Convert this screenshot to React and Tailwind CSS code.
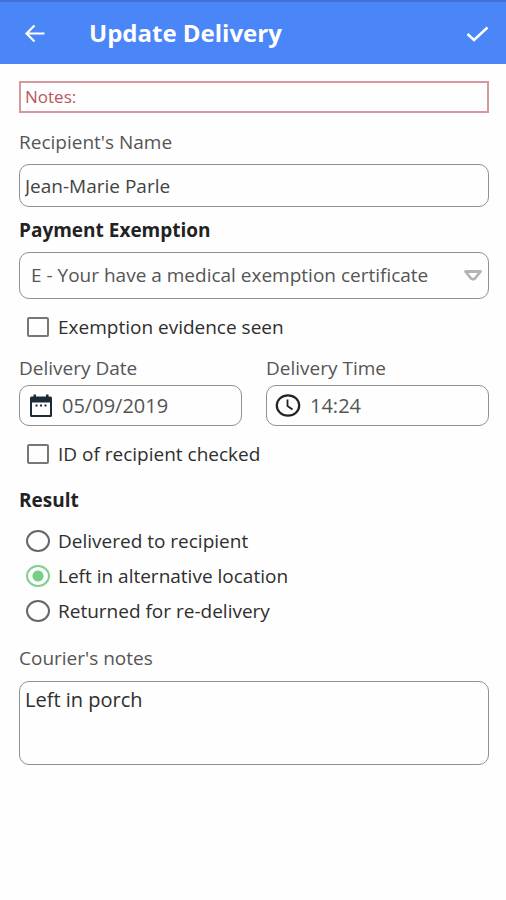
import { useState } from "react";

function BackIcon() {
  return (
    <svg width="22" height="22" viewBox="0 0 22 22" fill="none" stroke="currentColor" strokeWidth="2.2" aria-hidden="true">
      <path d="M20.500 11.500H2.500M10.500 3.500l-8 8 8 8" />
    </svg>
  );
}

function CheckIcon() {
  return (
    <svg width="24" height="20" viewBox="0 0 24 20" fill="none" stroke="currentColor" strokeWidth="2.4" aria-hidden="true">
      <path d="M1.500 11 8 17 21.500 4.500" />
    </svg>
  );
}

function CalendarIcon() {
  return (
    <svg width="22" height="24" viewBox="0 0 22 24" aria-hidden="true">
      <rect x="0" y="2.500" width="22" height="20.500" rx="1.500" fill="#1d2b36" />
      <path d="M2 8.500h18V21H2V8.500Z" fill="#fff" />
      <path d="M3.500 0.500h2.500v4H3.500zM16 0.500h2.500v4H16z" fill="#1d2b36" />
      <path d="M5.500 10.500h2v2h-2zM10 10.500h2v2h-2zM14.500 10.500h2v2h-2z" fill="#1d2b36" />
    </svg>
  );
}

function ClockIcon() {
  return (
    <svg width="26" height="24" viewBox="0 0 26 24" fill="none" stroke="#222" strokeWidth="2.200" aria-hidden="true">
      <ellipse cx="13" cy="11.500" rx="11.200" ry="10.200" />
      <path d="M12.500 5.500v6.500l5 3.500" strokeWidth="1.800" />
    </svg>
  );
}

function FieldLabel({ htmlFor, children }) {
  return (
    <label htmlFor={htmlFor} className="block text-[19px] leading-6 text-[#555]">
      {children}
    </label>
  );
}

function CheckRow({ id, label }) {
  return (
    <div className="mt-4 flex items-center gap-2 pl-[7px]">
      <span className="flex w-6 justify-center">
        <input id={id} type="checkbox" className="h-5 w-[22px] appearance-none rounded-xs border-2 border-[#777] checked:bg-[#6ccb7d]" />
      </span>
      <label htmlFor={id} className="text-[19px] leading-6 text-[#2e2e2e]">{label}</label>
    </div>
  );
}

function RadioRow({ id, label, value, onSelect }) {
  return (
    <div className="flex h-[35px] items-center gap-2 pl-[7px]">
      <input
        id={id}
        type="radio"
        name="result"
        checked={value === id}
        onChange={() => onSelect(id)}
        className="h-[22px] w-6 appearance-none rounded-[50%] border-2 border-[#666] checked:border-[#7fd08c] checked:bg-[radial-gradient(circle,#76cf86_0_5px,transparent_6px)]"
      />
      <label htmlFor={id} className="text-[19px] leading-6 text-[#2e2e2e]">{label}</label>
    </div>
  );
}

export default function App() {
  const [result, setResult] = useState("alternative");

  return (
    <div className="min-h-screen bg-[#fefefe] font-['Open_Sans','Noto_Sans',sans-serif]">
      <header className="flex h-16 items-center border-t-2 border-[#4272d4] bg-[#4a86f7] pr-4 pl-6 text-white">
        <button type="button" aria-label="Back"><BackIcon /></button>
        <h1 className="ml-[43px] flex-1 text-[24px] leading-8 font-bold">Update Delivery</h1>
        <button type="button" aria-label="Save"><CheckIcon /></button>
      </header>

      <form className="pt-[17px] pr-[17px] pb-6 pl-[19px]">
        <p className="border-2 border-[#d4989e] px-1 text-[17px] leading-7 text-[#b95661]">Notes:</p>

        <div className="mt-[17px] flex flex-col gap-[10px]">
          <FieldLabel htmlFor="recipient">Recipient's Name</FieldLabel>
          <input id="recipient" defaultValue="Jean-Marie Parle" className="h-[43px] w-full rounded-[10px] border border-[#909090] px-[5px] text-[19px] text-[#444]" />
        </div>

        <div className="mt-[11px] flex flex-col gap-[10px]">
          <label htmlFor="exemption" className="text-[19px] leading-6 font-bold text-[#222]">Payment Exemption</label>
          <div className="relative">
            <select id="exemption" className="block h-[47px] w-full appearance-none rounded-[10px] border border-[#909090] pr-8 pl-[11px] text-[19px] text-[#555]">
              <option>E - Your have a medical exemption certificate</option>
            </select>
            <svg className="pointer-events-none absolute top-[17px] right-[6px]" width="20" height="13" viewBox="0 0 20 13" fill="none" stroke="#b4b4b4" strokeWidth="2.800" strokeLinejoin="round" aria-hidden="true">
              <path d="M2.500 2.500h15L12 9.500q-2 1.500-4 0Z" />
            </svg>
          </div>
        </div>

        <CheckRow id="evidence" label="Exemption evidence seen" />

        <div className="mt-[17px] grid grid-cols-2 gap-6">
          <div className="flex flex-col gap-[5px]">
            <FieldLabel htmlFor="date">Delivery Date</FieldLabel>
            <div className="flex h-[41px] items-center gap-[10px] rounded-[10px] border border-[#909090] pl-[10px]">
              <CalendarIcon />
              <input id="date" defaultValue="05/09/2019" className="w-full min-w-0 flex-1 text-[20px] text-[#555]" />
            </div>
          </div>
          <div className="flex flex-col gap-[5px]">
            <FieldLabel htmlFor="time">Delivery Time</FieldLabel>
            <div className="flex h-[41px] items-center gap-[9px] rounded-[10px] border border-[#909090] pl-2">
              <ClockIcon />
              <input id="time" defaultValue="14:24" className="w-full min-w-0 flex-1 text-[20px] text-[#555]" />
            </div>
          </div>
        </div>

        <CheckRow id="identity" label="ID of recipient checked" />

        <fieldset className="mt-[22px]">
          <legend className="mb-[11px] text-[19px] leading-6 font-bold text-[#222]">Result</legend>
          <RadioRow id="delivered" label="Delivered to recipient" value={result} onSelect={setResult} />
          <RadioRow id="alternative" label="Left in alternative location" value={result} onSelect={setResult} />
          <RadioRow id="returned" label="Returned for re-delivery" value={result} onSelect={setResult} />
        </fieldset>

        <div className="mt-[18px] flex flex-col gap-[11px]">
          <FieldLabel htmlFor="notes">Courier's notes</FieldLabel>
          <textarea id="notes" defaultValue="Left in porch" className="h-[84px] w-full resize-none rounded-[10px] border border-[#909090] px-[5px] py-[6px] text-[20px] leading-6 text-[#2e2e2e]" />
        </div>
      </form>
    </div>
  );
}
